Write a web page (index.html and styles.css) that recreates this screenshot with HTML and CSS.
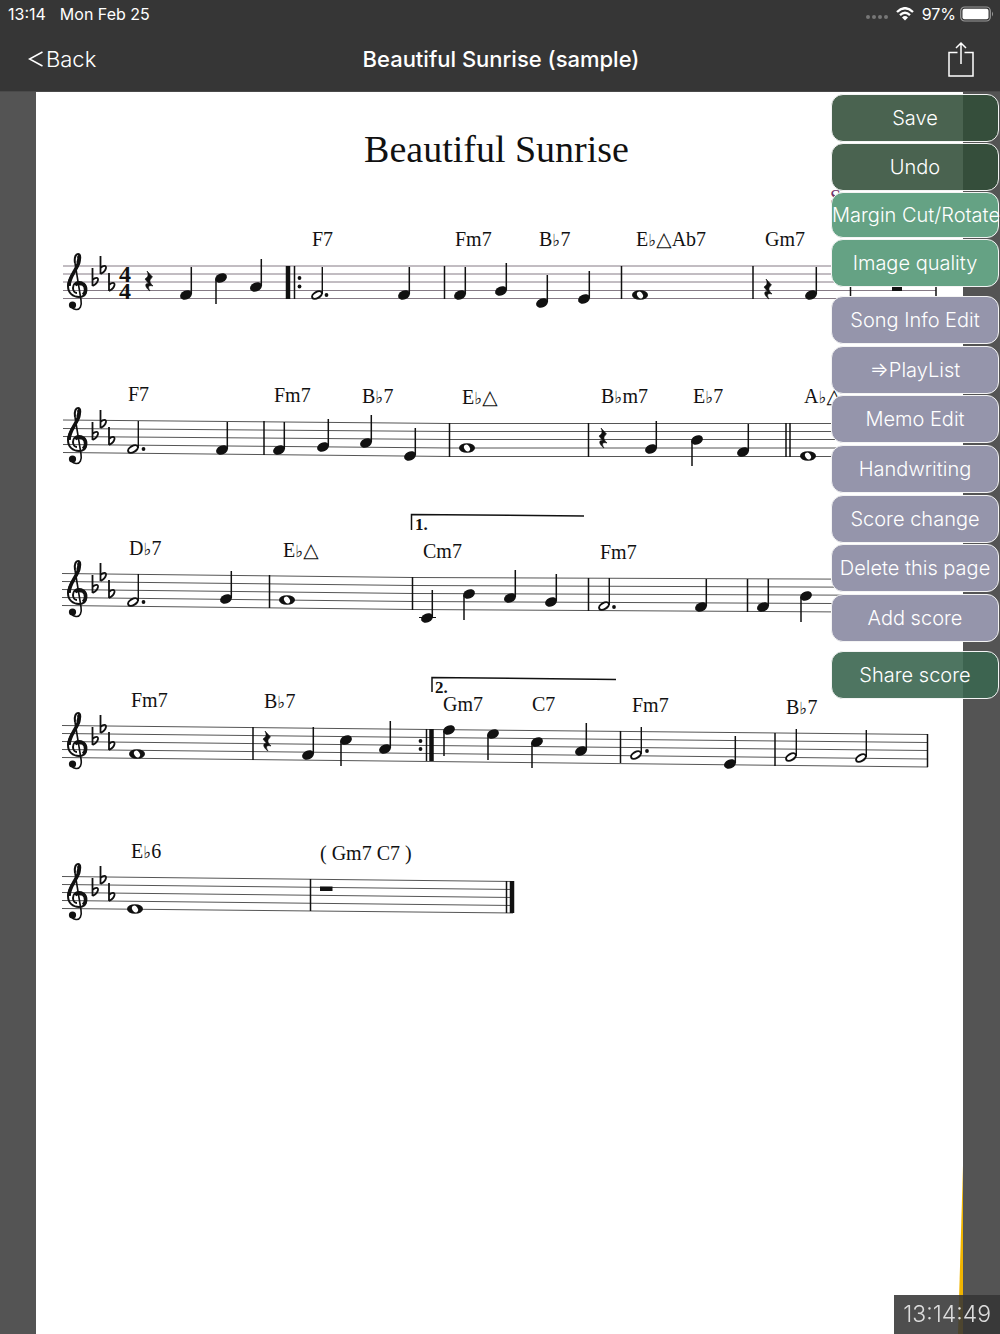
FILE: index.html
```html
<!DOCTYPE html>
<html lang="en">
<head>
  <meta charset="UTF-8" />
  <meta name="viewport" content="width=device-width, initial-scale=1.0"/>
  <title>Beautiful Sunrise (sample)</title>
  <link rel="stylesheet" href="styles.css">
</head>
<body>
<header class="header">
  <div class="status-bar">
    <span>13:14</span>
    <span>Mon Feb 25</span>
    <div class="status-right">
      <svg class="signal" width="22" height="4" viewBox="0 0 22 4">
        <circle cx="2" cy="2" r="2"/><circle cx="8" cy="2" r="2"/><circle cx="14" cy="2" r="2"/><circle cx="20" cy="2" r="2"/>
      </svg>
      <svg class="wifi" width="18" height="14" viewBox="0 0 18 14">
        <path d="M1 5 Q9 -2.6 17 5" stroke-width="2.4"/>
        <path d="M4 8.2 Q9 3.4 14 8.2" stroke-width="2.3"/>
        <path d="M6 10.4 Q9 7.6 12 10.4 L9 13.6z" class="fill"/>
      </svg>
      <span class="percent">97%</span>
      <svg class="battery" width="34" height="16" viewBox="0 0 34 16">
        <rect x=".7" y="1" width="29.6" height="14" rx="4" fill="none" stroke="#999" stroke-width="1.2"/>
        <rect x="2.5" y="2.8" width="26" height="10.4" rx="2" fill="#fff"/>
        <path d="M32 5.5 q2 2.5 0 5z" fill="#999"/>
      </svg>
    </div>
  </div>
  <nav class="nav-bar">
    <a href="#" class="back-link">
      <svg width="16" height="18" viewBox="0 0 16 18"><path d="M14.5 2 L1.5 9 L14.5 16"/></svg>Back
    </a>
    <div class="nav-title">Beautiful Sunrise (sample)</div>
    <button class="share-icon" aria-label="Share">
      <svg width="26" height="36" viewBox="0 0 26 36">
        <path d="M9.5 11.5 H1 V35 H25 V11.5 H16.5 M13 23 V2 M8 7 L13 2 L18 7"/>
      </svg>
    </button>
  </nav>
</header>

<main class="viewer">
  <article class="page">
    <h1 class="song-title">Beautiful Sunrise</h1>
    <svg class="score" viewBox="36 180 927 1154">
      <defs>
        <!-- treble clef and three flats, origin on the top line -->
        <g id="clef">
          <path class="ink" stroke-width="2" d="M75 -3 C74 -9 76 -12 78 -12 C81 -12 81 -6 78 -1 C75 6 68 11 68 20 C68 27 73 31 79 31 C84 31 86 28 86 24 C86 19 83 16 79 16 C75 16 73 19 73 22 C73 25 75 27 77 27"/>
          <path class="ink" stroke-width="3.6" d="M79 -4 C76 5 69 11 69 20 M83 18 C87 21 86 27 83 29 M78 -10.5 C80 -9 79 -6 78 -3 M75 19 C77 17 80 17 83 18"/>
          <path class="ink" stroke-width="1.6" d="M75 -3 L81 34 C82 40 80 44 76 43.5 C72 43 70 40 71 38"/>
          <circle cx="72.5" cy="39" r="3.6"/>
          <use href="#flat" x="92.5" y="15"/>
          <use href="#flat" x="100.5" y="3"/>
          <use href="#flat" x="109" y="20"/>
        </g>
        <path id="flat" class="ink" stroke-width="1.8" d="M0 -13 V5 M0 -1 C3 -4 6 -3.5 5.5 -1 C5 1.500 2 4 0 5"/>
        <ellipse id="head" rx="6.2" ry="4.4" transform="rotate(-25)"/>
        <g id="up"><use href="#head"/><path class="ink" stroke-width="1.5" d="M5.3 -1 V-28"/></g>
        <g id="down"><use href="#head"/><path class="ink" stroke-width="1.5" d="M-5 1 V26"/></g>
        <g id="half"><ellipse rx="5.4" ry="3" transform="rotate(-30)" fill="#fff" stroke="#111" stroke-width="2"/><path class="ink" stroke-width="1.4" d="M5.3 -1 V-28"/></g>
        <g id="whole"><ellipse rx="8" ry="4.8"/><ellipse rx="3.6" ry="2.7" transform="rotate(55)" fill="#fff"/></g>
        <path id="rest" d="M-2 -10 L3.5 -4 C0 -1 0 1 4 5 C0 4 -2 5 1 10 C-5 6 -4 1 0 3 L-4 -2 C-1 -4 0 -6 -2 -10z" stroke="#111" stroke-width=".6"/>
        <circle id="dot" r="1.9"/>
      </defs>

      <!-- line 1 -->
      <text class="chord composer" x="830" y="204">S</text>
      <path class="staff faded" d="M63 266H936 M63 274H936 M63 282H936 M63 290.5H936 M63 298.5H936"/>
      <use href="#clef" y="266"/>
      <text class="meter" x="119" y="282">4</text>
      <text class="meter" x="119" y="299">4</text>
      <use href="#rest" x="149" y="281"/>
      <use href="#up" x="186" y="295"/>
      <use href="#down" x="221" y="278"/>
      <use href="#up" x="256" y="287"/>
      <path class="thick" d="M288 266V299"/>
      <path class="bar" d="M294.5 266V299 M444.5 266V299 M621.5 266V299 M753 266V299 M850.5 266V299 M936 266V299"/>
      <use href="#dot" x="299.5" y="278"/><use href="#dot" x="299.5" y="286.5"/>
      <use href="#half" x="317" y="295"/><use href="#dot" x="326.5" y="295"/>
      <use href="#up" x="404" y="295"/>
      <use href="#up" x="460" y="295"/>
      <use href="#up" x="501" y="291"/>
      <use href="#up" x="542" y="303"/>
      <use href="#up" x="584" y="299"/>
      <use href="#whole" x="640" y="295"/>
      <use href="#rest" x="768" y="289"/>
      <use href="#up" x="811" y="295"/>
      <path d="M892 287h10v4h-10z"/>
      <text class="chord" x="312" y="246">F7</text>
      <text class="chord" x="455" y="246">Fm7</text>
      <text class="chord" x="539" y="246">B<tspan class="acc">♭</tspan>7</text>
      <text class="chord" x="636" y="246">E<tspan class="acc">♭</tspan><tspan class="maj">△</tspan>Ab7</text>
      <text class="chord" x="765" y="246">Gm7</text>

      <!-- line 2 -->
      <path class="staff" d="M63 420L450 423.5H936 M63 428.5L450 431.5H936 M63 436.5L450 439.5H936 M63 444.5L450 448H936 M63 452.5L450 456.5H936"/>
      <use href="#clef" y="420"/>
      <path class="bar" d="M264 421V455 M449.5 423V457 M588.5 423V457 M786 423V457 M790 423V457"/>
      <use href="#half" x="133" y="449"/><use href="#dot" x="143.5" y="449"/>
      <use href="#up" x="222" y="450"/>
      <use href="#up" x="279" y="450"/>
      <use href="#up" x="323" y="447"/>
      <use href="#up" x="366" y="443"/>
      <use href="#up" x="410" y="456"/>
      <use href="#whole" x="467" y="448"/>
      <use href="#rest" x="603" y="438"/>
      <use href="#up" x="651" y="449"/>
      <use href="#down" x="697" y="440"/>
      <use href="#up" x="743" y="452"/>
      <use href="#whole" x="808" y="456"/>
      <text class="chord" x="128" y="401">F7</text>
      <text class="chord" x="274" y="402">Fm7</text>
      <text class="chord" x="362" y="403">B<tspan class="acc">♭</tspan>7</text>
      <text class="chord" x="462" y="404">E<tspan class="acc">♭</tspan><tspan class="maj">△</tspan></text>
      <text class="chord" x="601" y="403">B<tspan class="acc">♭</tspan>m7</text>
      <text class="chord" x="693" y="403">E<tspan class="acc">♭</tspan>7</text>
      <text class="chord" x="804" y="403">A<tspan class="acc">♭</tspan><tspan class="maj">△</tspan></text>

      <!-- line 3 -->
      <path class="staff" d="M62 573.5L413 577.5L936 579.5 M62 581.5L413 585.5L936 587.5 M62 589.5L413 593.5L936 595.5 M62 597.5L413 601.5L936 604 M62 605.5L413 609.5L936 612.5"/>
      <use href="#clef" y="573"/>
      <path class="bar" d="M269.5 575V608 M412.5 577V610 M588.5 578V611 M747.5 579V612"/>
      <use href="#half" x="133" y="602"/><use href="#dot" x="143.5" y="602"/>
      <use href="#up" x="226" y="599"/>
      <use href="#whole" x="287" y="600"/>
      <use href="#up" x="427" y="618"/>
      <path class="ink" d="M419 617.5H436"/>
      <use href="#down" x="469" y="594"/>
      <use href="#up" x="510" y="598"/>
      <use href="#up" x="551" y="602"/>
      <use href="#half" x="604" y="606"/><use href="#dot" x="614" y="607"/>
      <use href="#up" x="701" y="607"/>
      <use href="#up" x="763" y="607"/>
      <use href="#down" x="806" y="596"/>
      <path class="bar" d="M411.5 530V514.5L584 516"/>
      <text class="volta" x="415" y="530">1.</text>
      <text class="chord" x="129" y="555">D<tspan class="acc">♭</tspan>7</text>
      <text class="chord" x="283" y="557">E<tspan class="acc">♭</tspan><tspan class="maj">△</tspan></text>
      <text class="chord" x="423" y="558">Cm7</text>
      <text class="chord" x="600" y="559">Fm7</text>

      <!-- line 4 -->
      <path class="staff" d="M62 725.5L430 729.5L928 734.5 M62 733.5L430 737.5L928 742.5 M62 741.5L430 745.5L928 750.5 M62 749.5L430 753.5L928 759 M62 757.5L430 761.5L928 767"/>
      <use href="#clef" y="725"/>
      <path class="thick" d="M431.5 729V761"/>
      <path class="bar" d="M253 727V760 M426.5 729V761 M620.5 731V763 M775 733V766 M927.5 734V767"/>
      <use href="#whole" x="137" y="754"/>
      <use href="#rest" x="267" y="741"/>
      <use href="#up" x="308" y="755"/>
      <use href="#down" x="346" y="740"/>
      <use href="#up" x="385" y="749"/>
      <use href="#dot" x="420.5" y="741"/><use href="#dot" x="420.5" y="749"/>
      <use href="#down" x="449" y="730"/>
      <use href="#down" x="493" y="734"/>
      <use href="#down" x="537" y="742"/>
      <use href="#up" x="581" y="751"/>
      <use href="#half" x="636" y="755"/><use href="#dot" x="647" y="751"/>
      <use href="#up" x="730" y="764"/>
      <use href="#half" x="791" y="757"/>
      <use href="#half" x="861" y="758"/>
      <path class="bar" d="M432 692V677.5L616 679.5"/>
      <text class="volta" x="435" y="693">2.</text>
      <text class="chord" x="131" y="707">Fm7</text>
      <text class="chord" x="264" y="708">B<tspan class="acc">♭</tspan>7</text>
      <text class="chord" x="443" y="711">Gm7</text>
      <text class="chord" x="532" y="711">C7</text>
      <text class="chord" x="632" y="712">Fm7</text>
      <text class="chord" x="786" y="714">B<tspan class="acc">♭</tspan>7</text>

      <!-- line 5 -->
      <path class="staff" d="M62 876.5L513 881.5 M62 884.5L513 889.5 M62 892.5L513 897.5 M62 900.5L513 905.5 M62 908.5L513 913"/>
      <use href="#clef" y="876"/>
      <path class="bar" d="M310.5 879V911 M506.5 881V913"/>
      <path class="thick" d="M512 881V913"/>
      <use href="#whole" x="135" y="909"/>
      <path d="M320 886.5h12.5v4.5h-12.5z"/>
      <text class="chord" x="131" y="858">E<tspan class="acc">♭</tspan>6</text>
      <text class="chord" x="320" y="860">( Gm7 C7 )</text>

      <path class="desk" d="M963 1165V1334H958z"/>
    </svg>
  </article>

  <div class="menu">
    <button class="menu-button dark">Save</button>
    <button class="menu-button dark">Undo</button>
    <button class="menu-button green short">Margin Cut/Rotate</button>
    <button class="menu-button green">Image quality</button>
    <div class="menu-group">
      <button class="menu-button">Song Info Edit</button>
      <button class="menu-button">⇒PlayList</button>
      <button class="menu-button">Memo Edit</button>
      <button class="menu-button">Handwriting</button>
      <button class="menu-button">Score change</button>
      <button class="menu-button">Delete this page</button>
      <button class="menu-button">Add score</button>
    </div>
    <button class="menu-button share">Share score</button>
  </div>
</main>

<div class="clock">13:14:49</div>
</body>
</html>
```

FILE: styles.css
```css
body {
  font-family: Inter, "Liberation Sans", "DejaVu Sans", sans-serif;
  margin: 0;
  background: #545454;
  color: #fff;
}

.header {
  background: #363636;
}

.status-bar {
  height: 28px;
  padding: 0 6px 0 8px;
  display: flex;
  align-items: center;
  gap: 14px;
  font-size: 16px;
}

.status-right {
  margin-left: auto;
  display: flex;
  align-items: center;
  gap: 8px;
}

.signal {
  fill: #777;
  margin-top: 6px;
}

.wifi {
  fill: none;
  stroke: #fff;
}

.wifi .fill {
  fill: #fff;
  stroke: none;
}

.percent {
  margin-right: -4px;
}

.nav-bar {
  height: 64px;
  box-sizing: border-box;
  padding: 0 26px 2px 28px;
  display: grid;
  grid-template-columns: 1fr auto 1fr;
  align-items: center;
  border-bottom: 1px solid #4a4a4a;
}

.back-link {
  display: flex;
  align-items: center;
  gap: 2px;
  color: #fff;
  font-size: 22px;
  font-weight: 300;
  text-decoration: none;
}

.back-link svg,
.share-icon svg {
  fill: none;
  stroke: #fff;
  stroke-width: 1.5;
}

.nav-title {
  font-size: 22px;
  font-weight: 500;
}

.share-icon {
  justify-self: end;
  display: flex;
  padding: 0;
  border: none;
  background: none;
  cursor: pointer;
}

.viewer {
  position: relative;
  padding: 0 37px 0 36px;
}

.page {
  background: #fff;
  color: #111;
}

.song-title {
  margin: 0;
  height: 88px;
  padding-top: 35px;
  padding-right: 6px;
  box-sizing: border-box;
  font-family: "Liberation Serif", serif;
  font-size: 38px;
  font-weight: 400;
  line-height: 44px;
  text-align: center;
}

.score {
  display: block;
  width: 100%;
  fill: #111;
}

.ink {
  fill: none;
  stroke: #111;
}

.staff {
  fill: none;
  stroke: #555;
}

.staff.faded {
  stroke: #857a85;
}

.bar {
  fill: none;
  stroke: #111;
  stroke-width: 1.5;
}

.thick {
  stroke: #111;
  stroke-width: 4.5;
}

.chord {
  font-family: "Liberation Serif", "DejaVu Sans", serif;
  font-size: 20px;
}

.composer {
  fill: #70336a;
}

.acc {
  font-family: "DejaVu Sans", sans-serif;
  font-size: 17px;
}

.maj {
  font-family: "DejaVu Sans", sans-serif;
  font-size: 20px;
}

.meter {
  font-family: "Liberation Serif", serif;
  font-size: 24px;
  font-weight: 700;
}

.volta {
  font-family: "Liberation Serif", serif;
  font-size: 17px;
  font-weight: 700;
}

.desk {
  fill: #f0b400;
}

.menu {
  position: absolute;
  top: 2px;
  right: 1px;
  width: 168px;
  display: flex;
  flex-direction: column;
  gap: 1px;
}

.menu-group {
  height: 346px;
  margin: 8px 0;
  display: flex;
  flex-direction: column;
  justify-content: space-between;
}

.menu-button {
  height: 48px;
  padding: 0;
  border: 1px solid #f4f4f4;
  border-radius: 12px;
  background: #9595ab;
  color: #fff;
  font-family: inherit;
  font-size: 20px;
  font-weight: 300;
  white-space: nowrap;
  cursor: pointer;
}

.menu-button.short {
  height: 46px;
}

.menu-button.dark {
  background: rgba(49, 77, 56, 0.88);
}

.menu-button.green {
  background: #65a284;
}

.menu-button.share {
  background: rgba(59, 102, 80, 0.9);
}

.clock {
  position: fixed;
  right: 0;
  bottom: 0;
  padding: 0 9px;
  background: rgba(54, 54, 54, 0.88);
  color: #ddd;
  font-size: 23px;
  font-weight: 300;
  line-height: 39px;
}
```
